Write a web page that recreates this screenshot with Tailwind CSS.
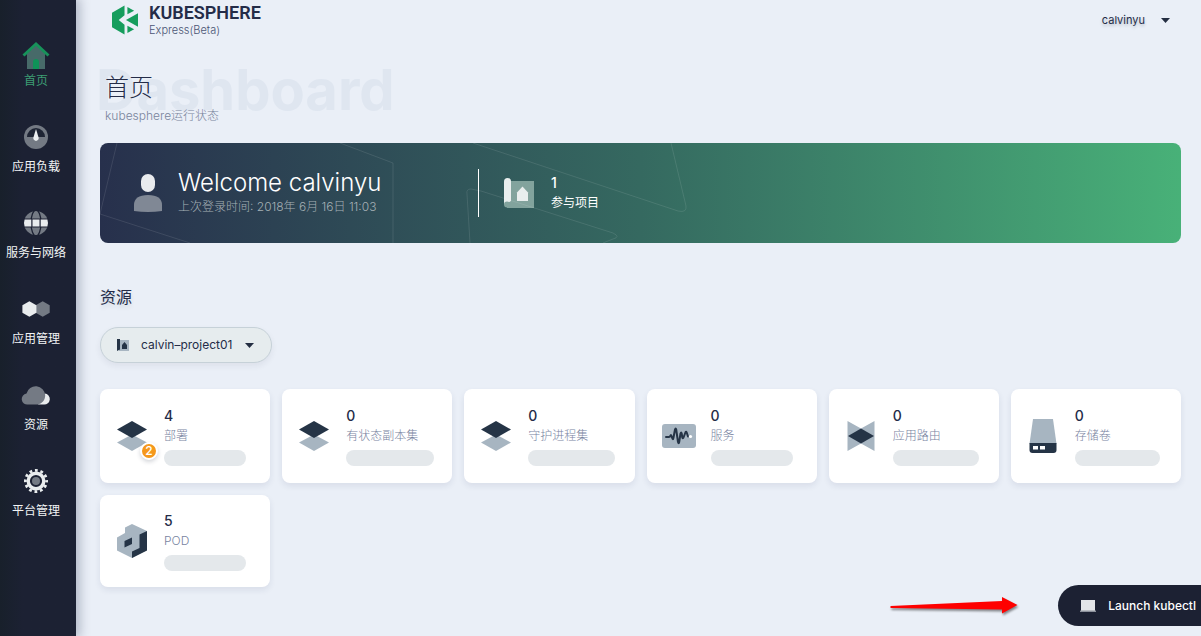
<!DOCTYPE html>
<html lang="zh-CN">
<head>
<meta charset="utf-8">
<meta name="viewport" content="width=device-width, initial-scale=1">
<title>KubeSphere</title>
<script src="https://cdn.jsdelivr.net/npm/@tailwindcss/browser@4"></script>
</head>
<body class="min-h-screen bg-[#eaeff7] font-['Inter','Noto_Sans_CJK_SC',sans-serif] text-[#242c48]">
<div class="flex min-h-screen">
  <aside class="w-[76px] shrink-0 bg-linear-to-r from-[#18202b] to-[#1c2133] to-30% shadow-[2px_0_10px_2px_rgba(35,45,80,0.28)]">
    <nav class="flex flex-col gap-[30px] pt-[38px] pr-1 text-xs text-[#f2f4f5]">
      <a href="#" class="flex h-14 flex-col items-center gap-[2px] text-[#3d9e74]">
        <svg class="size-8" viewBox="0 0 32 32"><path d="M7 15 16 7l9 8v16H7z" fill="#476a69"/><path d="M3.500 17.500 16 6l12.500 11.500" fill="none" stroke="#17925a" stroke-width="3"/><path d="M13 31v-7q0-3 3-3t3 3v7z" fill="#0f9358"/></svg>
        <span class="leading-[18px]">首页</span>
      </a>
      <a href="#" class="flex h-14 flex-col items-center gap-[2px]">
        <svg class="size-8" viewBox="0 0 32 32"><circle cx="16" cy="13" r="12" fill="#747a84"/><path d="M7 13a9 9 0 0 1 18 0z" fill="#1e2434"/><path d="m16 5 2.600 8.500a2.700 2.700 0 1 1-5.200 0z" fill="#eceff1"/></svg>
        <span class="leading-[18px]">应用负载</span>
      </a>
      <a href="#" class="flex h-14 flex-col items-center gap-[2px]">
        <svg class="size-8" viewBox="0 0 32 32"><circle cx="16" cy="13" r="12" fill="#747a84"/><g fill="none" stroke="#1c2133" stroke-width="1.300"><ellipse cx="16" cy="13" rx="5" ry="13"/></g><path d="M3 8.500h26v9H3z" fill="#1c2133"/><path d="M4.600 9.500h6.700v7H4.600q-1.200-3.500 0-7zM12.500 9.500h7v7h-7zM20.700 9.500h6.700q1.200 3.500 0 7h-6.700z" fill="#e9ecee"/></svg>
        <span class="leading-[18px]">服务与网络</span>
      </a>
      <a href="#" class="flex h-14 flex-col items-center gap-[2px]">
        <svg class="size-8" viewBox="0 0 32 32"><path d="m22.700 5.300 7 3.900v7.600l-7 3.900-7-3.900V9.200z" fill="#747a84"/><path d="m9.400 5.300 7 3.900v7.600l-7 3.900-7-3.900V9.200z" fill="#e9ecee"/></svg>
        <span class="leading-[18px]">应用管理</span>
      </a>
      <a href="#" class="flex h-14 flex-col items-center gap-[2px]">
        <svg class="size-8" viewBox="0 0 32 32"><path d="M18 22.500h5.800a5.500 5.500 0 0 0 1-11z" fill="#e9ecee"/><path d="M8 22.500A5.500 5.500 0 0 1 6.500 11.500a9.500 9.500 0 0 1 18.700 1.800c0 5-3.300 8.400-7.600 9.200z" fill="#747a84"/></svg>
        <span class="leading-[18px]">资源</span>
      </a>
      <a href="#" class="flex h-14 flex-col items-center gap-[2px]">
        <svg class="size-8" viewBox="0 0 32 32"><circle cx="16" cy="13" r="10.600" fill="none" stroke="#e9ecee" stroke-width="2.800" stroke-dasharray="2.800 2.750" stroke-dashoffset="1.400"/><circle cx="16" cy="13" r="7.800" fill="none" stroke="#e9ecee" stroke-width="3.400"/><circle cx="16" cy="13" r="4" fill="#747a84"/></svg>
        <span class="leading-[18px]">平台管理</span>
      </a>
    </nav>
  </aside>

  <div class="min-w-0 flex-1 pr-5 pl-6">
    <header class="flex h-10 items-center justify-between">
      <a href="#" class="flex items-center gap-[11px] pl-3">
        <svg class="h-[30px] w-[26px]" viewBox="0 0 27 30"><g fill="#169d5d"><path d="M13 0v10L7 15l6 5v10L0 22.500v-15z"/><path d="M16 1.500v7.500l7-3.500zM16 28.500V21l7 3.500zM27 8v14L14.500 15z"/></g></svg>
        <span class="flex flex-col">
          <span class="font-['Roboto',sans-serif] text-[18px] leading-5 font-semibold">KUBESPHERE</span>
          <span class="text-[11px] leading-[14px] font-light text-[#4a5574]">Express(Beta)</span>
        </span>
      </a>
      <button type="button" class="mr-[11px] flex items-center gap-4 text-[11px] leading-5 text-shadow-[0_2px_3px_rgba(36,46,66,0.25)]">calvinyu
        <svg class="h-[5px] w-[9px]" viewBox="0 0 9 5"><path d="M0 0h9L4.500 5z" fill="#242e42"/></svg>
      </button>
    </header>

    <main>
      <div class="relative flex h-[103px] flex-col pt-[30px] pl-[5px]">
        <div class="absolute top-5 -left-1 text-[56px] leading-[60px] font-bold text-[#dfe6f0]" aria-hidden="true">Dashboard</div>
        <h1 class="relative text-2xl leading-9 font-light">首页</h1>
        <p class="relative text-xs leading-5 font-light text-[#79849c]">kubesphere运行状态</p>
      </div>

      <section class="relative flex h-[100px] items-center overflow-hidden rounded-lg bg-linear-to-r from-[#27304c] via-[#356960] to-[#48b178] text-white">
        <svg class="absolute top-0 left-0 h-[100px] w-[600px]" viewBox="0 0 600 100" fill="none" stroke="#fff" stroke-opacity=".1"><path d="M17 0 0 71l90 29M240 0l53 20v80"/><path d="m370 100-3-49q-1-5 4-5l10 2 132 42q8 4 0 6l-10 4"/><path d="m373 0 205 68q9 2 8-5L571 0"/></svg>
        <div class="flex w-[378px] items-center gap-4 pl-[34px]">
          <svg class="h-[38px] w-7" viewBox="0 0 28 38"><rect x="7" width="14" height="18" rx="7" fill="#e9ebee"/><path d="M0 37v-6q0-10 14-10t14 10v6q-14 2-28 0z" fill="#808895"/></svg>
          <div>
            <h2 class="text-2xl leading-7 font-light whitespace-nowrap">Welcome calvinyu</h2>
            <p class="text-xs leading-5 font-light whitespace-nowrap text-[#a5b0b5]">上次登录时间: 2018年 6月 16日 11:03</p>
          </div>
        </div>
        <div class="h-12 w-px bg-white"></div>
        <div class="flex items-center gap-[17px] pl-[25px]">
          <svg class="size-[30px]" viewBox="0 0 30 30"><path d="M4 3h26v27H3z" fill="#82a39d"/><path d="M0 27V3.500a3.500 3.500 0 0 1 7 0V23z" fill="#e9eeee"/><circle cx="3" cy="26.500" r="3" fill="#82a39d"/><path d="m18.500 8.500 5.500 6V23H13v-8.500z" fill="#e9eeee"/></svg>
          <div>
            <div class="text-sm leading-5 font-medium">1</div>
            <div class="text-xs leading-5">参与项目</div>
          </div>
        </div>
      </section>

      <h2 class="mt-[43px] text-base leading-[22px] text-shadow-[0_3px_4px_rgba(36,46,66,0.12)]"><label for="project">资源</label></h2>

      <div class="relative mt-[19px] h-9 w-[172px]">
        <select id="project" class="size-full appearance-none rounded-full border border-[#c6d1d8] bg-[#e6ecee] pl-10 text-xs shadow-[0_3px_6px_rgba(36,46,66,0.07)]"><option>calvin–project01</option></select>
        <svg class="pointer-events-none absolute top-3 left-[17px] size-3" viewBox="0 0 12 12"><path d="M2 1h10v11H2z" fill="#a8b6c2"/><path d="M0 0h3v10.500L0 12zM5 10V6l2.500-3L10 6v4z" fill="#253446"/></svg>
        <svg class="pointer-events-none absolute top-4 right-[18px] h-[5px] w-[9px]" viewBox="0 0 9 5"><path d="M0 0h9L4.500 5z" fill="#242e42"/></svg>
      </div>

      <section class="mt-[26px] grid grid-cols-6 items-start gap-3">
        <a href="#" class="flex items-center gap-4 rounded-lg bg-white px-4 py-[17px] shadow-[0_3px_6px_rgba(36,46,90,0.09)]">
          <span class="relative flex w-8 shrink-0 justify-center">
            <svg class="h-[30px] w-[30px]" viewBox="0 0 30 30"><path d="m15 13.500 15 8L15 30 0 21.500z" fill="#a7b5c1"/><path d="m15 0 15 8.500L15 17 0 8.500z" fill="#253446"/></svg>
            <span class="absolute top-[21px] left-6 flex size-[18px] items-center justify-center rounded-full border-2 border-white bg-[#f5981c] text-xs leading-none font-medium text-white shadow-[0_2px_4px_rgba(36,46,66,0.2)]">2</span>
          </span>
          <span class="flex flex-col"><strong class="text-sm leading-5 font-medium">4</strong><span class="text-xs leading-5 font-light text-[#79849f]">部署</span><span class="mt-1 h-4 w-[82px] rounded-full bg-[#e4e8eb]"></span></span>
        </a>
        <a href="#" class="flex items-center gap-4 rounded-lg bg-white px-4 py-[17px] shadow-[0_3px_6px_rgba(36,46,90,0.09)]">
          <span class="flex w-8 shrink-0 justify-center"><svg class="h-[30px] w-[30px]" viewBox="0 0 30 30"><path d="m15 13.500 15 8L15 30 0 21.500z" fill="#a7b5c1"/><path d="m15 0 15 8.500L15 17 0 8.500z" fill="#253446"/></svg></span>
          <span class="flex flex-col"><strong class="text-sm leading-5 font-medium">0</strong><span class="text-xs leading-5 font-light text-[#79849f]">有状态副本集</span><span class="mt-1 h-4 w-[88px] rounded-full bg-[#e4e8eb]"></span></span>
        </a>
        <a href="#" class="flex items-center gap-4 rounded-lg bg-white px-4 py-[17px] shadow-[0_3px_6px_rgba(36,46,90,0.09)]">
          <span class="flex w-8 shrink-0 justify-center"><svg class="h-[30px] w-[30px]" viewBox="0 0 30 30"><path d="m15 13.500 15 8L15 30 0 21.500z" fill="#a7b5c1"/><path d="m15 0 15 8.500L15 17 0 8.500z" fill="#253446"/></svg></span>
          <span class="flex flex-col"><strong class="text-sm leading-5 font-medium">0</strong><span class="text-xs leading-5 font-light text-[#79849f]">守护进程集</span><span class="mt-1 h-4 w-[87px] rounded-full bg-[#e4e8eb]"></span></span>
        </a>
        <a href="#" class="flex items-center gap-4 rounded-lg bg-white px-4 py-[17px] shadow-[0_3px_6px_rgba(36,46,90,0.09)]">
          <span class="flex w-8 shrink-0 justify-center"><svg class="h-6 w-[34px] shrink-0" viewBox="0 0 34 24"><rect width="34" height="24" rx="3" fill="#a7b5c1"/><path d="M4 13h3q1 0 1.500-1.500t1.500 2 1.500 0L13 5.500q.700-2 1.200 0L16 18q.700 2.500 1.200 0L18.500 9.500q.700-2 1.200 0l.600 4q.700 1.500 1.400-.5l1.700-4.500q.700-1.500 1.300 0L26 12.500" fill="none" stroke="#253446" stroke-width="2" stroke-linecap="round" stroke-linejoin="round"/><circle cx="28.500" cy="12.500" r="1.600" fill="#fff"/></svg></span>
          <span class="flex flex-col"><strong class="text-sm leading-5 font-medium">0</strong><span class="text-xs leading-5 font-light text-[#79849f]">服务</span><span class="mt-1 h-4 w-[82px] rounded-full bg-[#e4e8eb]"></span></span>
        </a>
        <a href="#" class="flex items-center gap-4 rounded-lg bg-white px-4 py-[17px] shadow-[0_3px_6px_rgba(36,46,90,0.09)]">
          <span class="flex w-8 shrink-0 justify-center"><svg class="h-[30px] w-7" viewBox="0 0 28 30"><path d="m.500 0 13.500 7.500L27.500 0v30L14 22.500.500 30z" fill="#a7b5c1"/><path d="m14 7.500 13 7.500-13 7.500L1 15z" fill="#253446"/></svg></span>
          <span class="flex flex-col"><strong class="text-sm leading-5 font-medium">0</strong><span class="text-xs leading-5 font-light text-[#79849f]">应用路由</span><span class="mt-1 h-4 w-[86px] rounded-full bg-[#e4e8eb]"></span></span>
        </a>
        <a href="#" class="flex items-center gap-4 rounded-lg bg-white px-4 py-[17px] shadow-[0_3px_6px_rgba(36,46,90,0.09)]">
          <span class="flex w-8 shrink-0 justify-center"><svg class="h-[34px] w-7" viewBox="0 0 28 34"><path d="M4 0h20l3.500 25H.500z" fill="#a7b5c1"/><path d="M.500 24h27v7q0 3-3 3h-21q-3 0-3-3z" fill="#253446"/><path d="M4 27h5v3.500H4zM11 27h5v3.500h-5z" fill="#fff"/></svg></span>
          <span class="flex flex-col"><strong class="text-sm leading-5 font-medium">0</strong><span class="text-xs leading-5 font-light text-[#79849f]">存储卷</span><span class="mt-1 h-4 w-[85px] rounded-full bg-[#e4e8eb]"></span></span>
        </a>
        <a href="#" class="flex items-center gap-4 rounded-lg bg-white p-4 shadow-[0_3px_6px_rgba(36,46,90,0.09)]">
          <span class="flex w-8 shrink-0 justify-center"><svg class="h-[34px] w-[30px]" viewBox="0 0 30 34"><path d="M15 0 30 7v19l-15 8L0 26.500V13.500L8 9V3.500z" fill="#a7b5c1"/><path d="M30 7v19.500L15 34v-6.500l7.500-3.500V10.500zM7.500 17l7.500-3.500v6.500l-7.500 3.500z" fill="#253446"/></svg></span>
          <span class="flex flex-col"><strong class="text-sm leading-5 font-medium">5</strong><span class="text-xs leading-5 font-light text-[#79849f]">POD</span><span class="mt-1 h-4 w-[82px] rounded-full bg-[#e4e8eb]"></span></span>
        </a>
      </section>
    </main>
  </div>
</div>

<div class="fixed right-0 bottom-[10px] flex items-center gap-10">
  <svg class="h-[22px] w-32 overflow-visible drop-shadow-[1px_2px_1px_rgba(0,0,0,0.45)]" viewBox="0 0 128 22"><path d="M.500 11 112 6V2l15.500 8L112 18.500v-4L.500 13z" fill="#fe0000"/></svg>
  <button type="button" class="flex h-[41px] items-center gap-3 rounded-l-full bg-[#1c2133] pr-[5px] pl-[22px] text-xs font-medium text-white">
    <svg class="h-3 w-4" viewBox="0 0 16 12"><path d="M1 0h14v11H1z" fill="#e3e5e8"/><path d="M0 10.500h16V12H0z" fill="#8b909b"/></svg>
    Launch kubectl
  </button>
</div>
</body>
</html>
